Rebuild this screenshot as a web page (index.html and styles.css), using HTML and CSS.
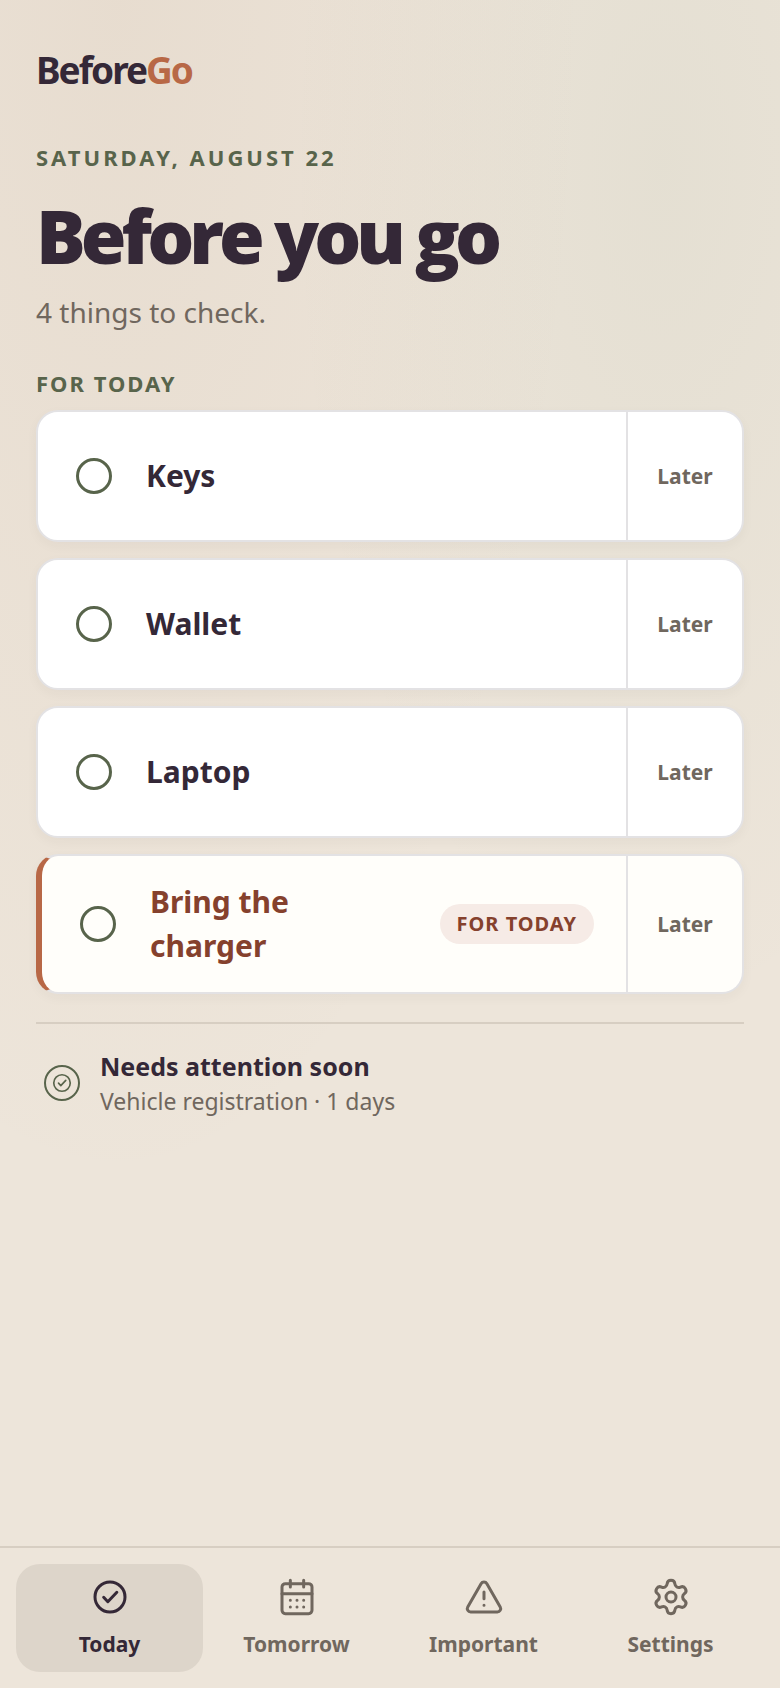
FILE: index.html
```
<!DOCTYPE html>
<html lang="en">
<head>
    <meta charset="UTF-8">
    <meta name="viewport" content="width=device-width, initial-scale=1.0">
    <title>BeforeGo</title>
    <link rel="stylesheet" href="styles.css">
</head>
<body>
    <main class="page">
        <div class="brand">Before<span>Go</span></div>

        <header class="intro">
            <p class="date">Saturday, August 22</p>
            <h1>Before you go</h1>
            <p class="summary">4 things to check.</p>
        </header>

        <section>
            <h2 class="section-label">For today</h2>
            <ul class="checklist">
                <li class="card">
                    <label class="item">
                        <input type="checkbox" class="check">
                        <span class="item-name">Keys</span>
                    </label>
                    <button type="button" class="later">Later</button>
                </li>
                <li class="card">
                    <label class="item">
                        <input type="checkbox" class="check">
                        <span class="item-name">Wallet</span>
                    </label>
                    <button type="button" class="later">Later</button>
                </li>
                <li class="card">
                    <label class="item">
                        <input type="checkbox" class="check">
                        <span class="item-name">Laptop</span>
                    </label>
                    <button type="button" class="later">Later</button>
                </li>
                <li class="card once">
                    <label class="item">
                        <input type="checkbox" class="check">
                        <span class="item-name">Bring the charger</span>
                        <span class="badge">For today</span>
                    </label>
                    <button type="button" class="later">Later</button>
                </li>
            </ul>
        </section>

        <section class="attention">
            <span class="attention-icon">
                <svg viewBox="0 0 24 24" aria-hidden="true">
                    <circle cx="12" cy="12" r="9"/>
                    <path d="m8.2 12.2 2.5 2.6 5.4-5.6"/>
                </svg>
            </span>
            <div>
                <h2>Needs attention soon</h2>
                <p>Vehicle registration · 1 days</p>
            </div>
        </section>
    </main>

    <nav class="tabs" aria-label="Main">
        <a href="#today" class="tab active" aria-current="page">
            <svg viewBox="0 0 24 24" aria-hidden="true">
                <circle cx="12" cy="12" r="9"/>
                <path d="m8.2 12.2 2.5 2.6 5.4-5.6"/>
            </svg>
            Today
        </a>
        <a href="#tomorrow" class="tab">
            <svg viewBox="0 0 24 24" aria-hidden="true">
                <rect x="3" y="4" width="18" height="18" rx="2"/>
                <path d="M8 2v4M16 2v4M3 10h18M8 14h.01M12 14h.01M16 14h.01M8 18h.01M12 18h.01M16 18h.01"/>
            </svg>
            Tomorrow
        </a>
        <a href="#important" class="tab">
            <svg viewBox="0 0 24 24" aria-hidden="true">
                <path d="m21.73 18-8-14a2 2 0 0 0-3.48 0l-8 14A2 2 0 0 0 4 21h16a2 2 0 0 0 1.73-3M12 9v4M12 17h.01"/>
            </svg>
            Important
        </a>
        <a href="#settings" class="tab">
            <svg viewBox="0 0 24 24" aria-hidden="true">
                <path d="M9.671 4.136a2.34 2.34 0 0 1 4.659 0 2.34 2.34 0 0 0 3.319 1.915 2.34 2.34 0 0 1 2.33 4.033 2.34 2.34 0 0 0 0 3.831 2.34 2.34 0 0 1-2.33 4.033 2.34 2.34 0 0 0-3.319 1.915 2.34 2.34 0 0 1-4.659 0 2.34 2.34 0 0 0-3.32-1.915 2.34 2.34 0 0 1-2.33-4.033 2.34 2.34 0 0 0 0-3.831A2.34 2.34 0 0 1 6.35 6.051a2.34 2.34 0 0 0 3.319-1.915"/>
                <circle cx="12" cy="12" r="3"/>
            </svg>
            Settings
        </a>
    </nav>
</body>
</html>
```

FILE: styles.css
```
:root {
    --ink: #342837;
    --muted: #70675e;
    --green: #58644b;
    --rust: #b86846;
    --rust-dark: #85412d;
    --line: #d7cec2;
    --card-line: #e3e2e4;
}
* {
    box-sizing: border-box;
}
body {
    margin: 0;
    min-height: 100vh;
    display: flex;
    flex-direction: column;
    font-family: 'Segoe UI', 'Noto Sans', sans-serif;
    color: var(--ink);
    background:
        radial-gradient(ellipse at 15% 0, rgba(163, 118, 82, 0.08), transparent 50%),
        radial-gradient(ellipse at 85% 10%, rgba(88, 130, 90, 0.06), transparent 40%),
        #ede5da;
}
h1, h2, p, ul {
    margin: 0;
    padding: 0;
}
.page {
    flex: 1;
    padding: 42px 36px 36px;
}
.brand {
    font-size: 37px;
    line-height: 56px;
    font-weight: 700;
    letter-spacing: -2px;
}
.brand span {
    color: var(--rust);
}
.intro {
    margin-top: 42px;
}
.date {
    color: var(--green);
    font-size: 22px;
    line-height: 34px;
    font-weight: 700;
    letter-spacing: 3px;
    text-transform: uppercase;
}
h1 {
    margin-top: 24px;
    font-family: 'Segoe UI', 'Open Sans', sans-serif;
    font-size: 74px;
    line-height: 76px;
    font-weight: 900;
    letter-spacing: -5px;
}
.summary {
    margin-top: 16px;
    color: var(--muted);
    font-size: 28px;
    line-height: 44px;
}
.section-label {
    margin-top: 32px;
    color: var(--green);
    font-size: 22px;
    line-height: 34px;
    font-weight: 700;
    letter-spacing: 2px;
    text-transform: uppercase;
}
.checklist {
    display: grid;
    gap: 16px;
    margin-top: 10px;
    list-style: none;
}
.card {
    display: flex;
    min-height: 132px;
    overflow: hidden;
    background: #fff;
    border: 2px solid var(--card-line);
    border-radius: 22px;
    box-shadow: 0 4px 12px rgba(52, 40, 55, 0.04);
}
.card.once {
    background: #fffefa;
    border-left: 6px solid var(--rust);
}
.item {
    flex: 1;
    display: flex;
    align-items: center;
    gap: 34px;
    padding: 24px 32px 24px 38px;
    cursor: pointer;
}
.check {
    appearance: none;
    flex: none;
    width: 36px;
    height: 36px;
    margin: 0;
    border: 3px solid var(--green);
    border-radius: 50%;
}
.check:checked {
    background: var(--green);
}
.item-name {
    flex: 1;
    font-size: 30px;
    line-height: 44px;
    font-weight: 700;
}
.once .item-name {
    color: var(--rust-dark);
}
.badge {
    padding: 0 17px;
    border-radius: 20px;
    background: #f6ebe6;
    color: var(--rust-dark);
    font-size: 20px;
    line-height: 40px;
    font-weight: 700;
    letter-spacing: 1px;
    text-transform: uppercase;
    white-space: nowrap;
}
.later {
    width: 116px;
    padding: 0;
    border: 0;
    border-left: 2px solid var(--card-line);
    background: none;
    color: var(--muted);
    font: inherit;
    font-size: 21px;
    font-weight: 700;
    cursor: pointer;
}
.attention {
    display: flex;
    align-items: center;
    gap: 20px;
    margin-top: 28px;
    padding: 24px 8px;
    border-top: 2px solid var(--line);
}
.attention-icon {
    display: grid;
    place-items: center;
    width: 36px;
    height: 36px;
    border: 2px solid var(--green);
    border-radius: 50%;
    color: var(--green);
}
.attention h2 {
    font-size: 25px;
    line-height: 36px;
    font-weight: 700;
}
.attention p {
    color: var(--muted);
    font-size: 23px;
    line-height: 34px;
}
svg {
    display: block;
    fill: none;
    stroke: currentColor;
    stroke-width: 1.8;
    stroke-linecap: round;
    stroke-linejoin: round;
}
.attention-icon svg {
    width: 22px;
    height: 22px;
}
.tabs {
    position: sticky;
    bottom: 0;
    display: grid;
    grid-template-columns: repeat(4, 1fr);
    padding: 16px;
    border-top: 2px solid var(--line);
    background: #ede5da;
}
.tab {
    display: flex;
    flex-direction: column;
    align-items: center;
    gap: 12px;
    padding: 13px 0;
    border-radius: 24px;
    color: var(--muted);
    font-size: 21px;
    line-height: 30px;
    font-weight: 700;
    text-decoration: none;
}
.tab svg {
    width: 40px;
    height: 40px;
}
.tab.active {
    background: #ddd5ca;
    color: var(--ink);
}
```
